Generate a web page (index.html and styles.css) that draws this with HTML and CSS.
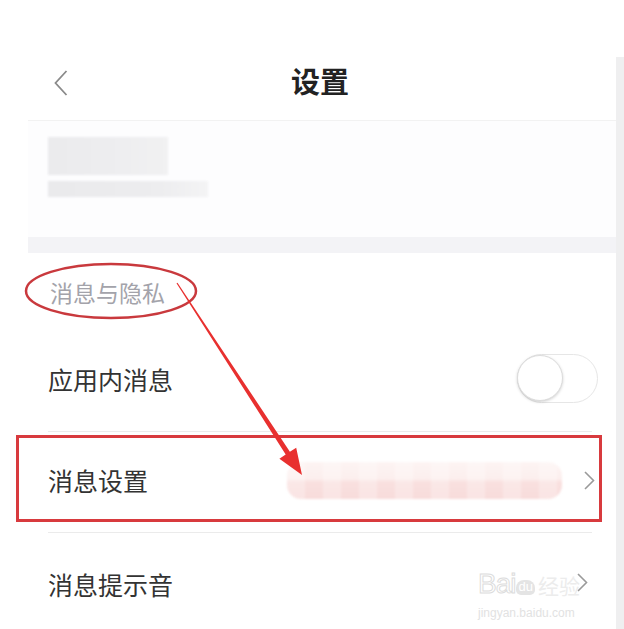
FILE: index.html
```html
<!DOCTYPE html>
<html lang="zh-CN">
<head>
    <meta charset="UTF-8">
    <meta name="viewport" content="width=device-width, initial-scale=1.0">
    <title>设置</title>
    <link rel="stylesheet" href="styles.css">
</head>
<body>
    <div class="top-gap"></div>
    <div class="page">
        <div class="screen">
            <div class="header">
                <div class="back">
                    <svg width="14" height="26" viewBox="0 0 14 26"><polyline points="12.5,1 1.5,13 12.5,25" fill="none" stroke="#8a8a8a" stroke-width="1.8"/></svg>
                </div>
                <div class="title">设置</div>
                <div></div>
            </div>
            <div class="profile">
                <div class="blur-name"></div>
                <div class="blur-line"></div>
            </div>
            <div class="band"></div>
            <div class="section-title">消息与隐私</div>
            <div class="row">
                <span class="label">应用内消息</span>
                <div class="toggle"><div class="knob"></div></div>
            </div>
            <div class="row">
                <span class="label">消息设置</span>
                <div class="blur-value"></div>
                <svg class="chevron" width="11" height="19" viewBox="0 0 11 19"><polyline points="1,1 9.5,9.5 1,18" fill="none" stroke="#9a9a9a" stroke-width="1.6"/></svg>
            </div>
            <div class="row last">
                <span class="label">消息提示音</span>
                <svg class="chevron up" width="11" height="19" viewBox="0 0 11 19"><polyline points="1,1 9.5,9.5 1,18" fill="none" stroke="#9a9a9a" stroke-width="1.6"/></svg>
            </div>
        </div>
        <div class="edge"></div>
    </div>

    <!-- annotations drawn over the screenshot -->
    <svg class="marks" width="624" height="629" viewBox="0 0 624 629">
        <ellipse cx="111" cy="291" rx="85" ry="27" fill="none" stroke="#c9393d" stroke-width="2.5"/>
        <rect x="17.5" y="436.5" width="583" height="84" fill="none" stroke="#d83a3e" stroke-width="3"/>
        <polygon points="176.5,283.3 177.5,282.7 289.9,451.8 296.2,447.7 302,475 279.4,458.7 285.7,454.6" fill="#e8302f"/>
    </svg>

    <div class="watermark">
        <div class="wm-logo"><span class="wm-bai">Bai</span><span class="wm-du">du</span><span class="wm-jy">经验</span></div>
        <div class="wm-url">jingyan.baidu.com</div>
    </div>
</body>
</html>
```

FILE: styles.css
```css
body {
    margin: 0;
    padding: 0;
    width: 624px;
    height: 629px;
    overflow: hidden;
    position: relative;
    background-color: #fff;
    font-family: "Noto Sans CJK SC", "Noto Sans", sans-serif;
    color: #333;
}

.top-gap {
    height: 57px;
}

.page {
    display: flex;
    height: 572px;
}

.screen {
    flex: 1;
    margin-left: 28px;
}

.edge {
    width: 8px;
    background-color: #efeff0;
}

.header {
    height: 63px;
    display: grid;
    grid-template-columns: 1fr auto 1fr;
    align-items: center;
    border-bottom: 1px solid #f2f2f2;
}

.back {
    padding-left: 26px;
    display: flex;
    align-items: center;
    margin-top: -12px;
}

.title {
    font-size: 29px;
    font-weight: bold;
    color: #222;
    line-height: 1;
    margin-left: -4px;
    margin-top: -17px;
}

.profile {
    height: 116px;
    background-color: #fdfdfe;
    padding: 16px 0 0 20px;
    box-sizing: border-box;
}

.blur-name {
    width: 120px;
    height: 38px;
    background: linear-gradient(90deg, #ebebed 0%, #eeeef0 60%, #f1f1f2 100%);
    filter: blur(1px);
}

.blur-line {
    width: 160px;
    height: 16px;
    margin-top: 6px;
    background: linear-gradient(90deg, #eaeaec 0%, #ededef 70%, #f4f4f5 100%);
    filter: blur(1px);
}

.band {
    height: 16px;
    background-color: #f3f3f6;
}

.section-title {
    height: 78px;
    display: flex;
    align-items: center;
    padding-left: 22px;
    font-size: 23px;
    color: #a3a3aa;
}

.row {
    height: 100px;
    margin: 0 24px 0 20px;
    border-bottom: 1px solid #ebebeb;
    display: flex;
    align-items: center;
}

.row.last {
    border-bottom: none;
}

.label {
    font-size: 25px;
    color: #333;
    margin-top: -4px;
}

.row.last .label {
    margin-top: 2px;
}

.toggle {
    margin-left: auto;
    margin-right: -6px;
    margin-top: -6px;
    width: 81px;
    height: 49px;
    box-sizing: border-box;
    border: 1.5px solid #e6e6e6;
    border-radius: 25px;
    background-color: #fff;
    display: flex;
    align-items: center;
}

.knob {
    width: 46px;
    height: 46px;
    box-sizing: border-box;
    border-radius: 50%;
    border: 1.5px solid #dcdcdc;
    background-color: #fff;
    box-shadow: 0 1px 3px rgba(0, 0, 0, 0.18);
    margin-left: -1px;
}

.blur-value {
    margin-left: auto;
    width: 275px;
    height: 37px;
    margin-top: -4px;
    border-radius: 14px;
    background:
        repeating-linear-gradient(90deg, rgba(255, 255, 255, 0.25) 0 18px, rgba(255, 255, 255, 0) 18px 36px),
        linear-gradient(180deg, #fdf4f3 0%, #fcefee 45%, #f9e0df 55%, #f8dcdb 100%);
    filter: blur(1px);
}

.chevron {
    margin-left: 22px;
    margin-right: -3px;
    margin-top: -4px;
}

.chevron.up {
    margin-left: auto;
    margin-right: 4px;
    margin-top: -2px;
}

.marks {
    position: absolute;
    left: 0;
    top: 0;
    pointer-events: none;
}

.watermark {
    position: absolute;
    left: 478px;
    top: 570px;
    width: 124px;
    pointer-events: none;
    white-space: nowrap;
}

.wm-logo {
    display: flex;
    align-items: flex-end;
    line-height: 1;
}

.wm-bai {
    font-family: "Liberation Sans", sans-serif;
    font-size: 28px;
    color: transparent;
    -webkit-text-stroke: 1px #dcdcdc;
    letter-spacing: -1px;
}

.wm-du {
    font-family: "Liberation Sans", sans-serif;
    font-size: 13px;
    color: #fff;
    background-color: #e4e4e4;
    border-radius: 8px 8px 5px 5px;
    padding: 0 2px 2px;
    margin: 0 3px 3px 1px;
}

.wm-jy {
    font-size: 21px;
    color: #ececec;
    margin-bottom: 2px;
}

.wm-url {
    font-family: "Liberation Sans", sans-serif;
    font-size: 12px;
    color: #e2e2e2;
    margin-top: 8px;
}
```
